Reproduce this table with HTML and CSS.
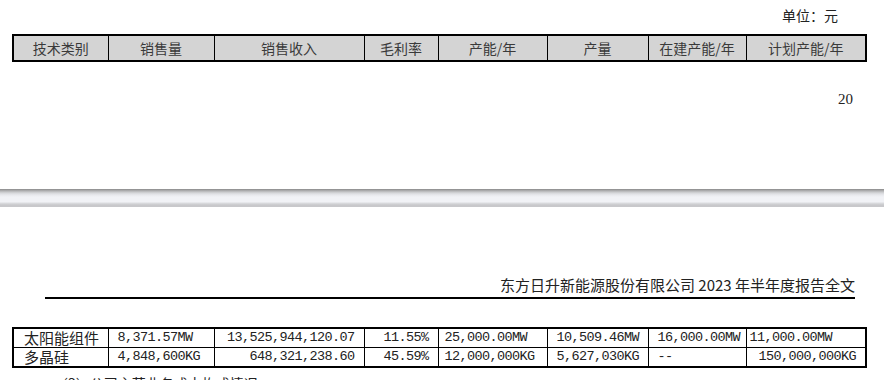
FILE: index.html
```html
<!DOCTYPE html>
<html lang="zh">
<head>
<meta charset="utf-8">
<link rel="stylesheet" href="styles.css">
</head>
<body>
<section class="page page-top">
  <div class="unit">单位：元</div>
  <table class="tbl">
    <colgroup>
      <col class="c1"><col class="c2"><col class="c3"><col class="c4"><col class="c5"><col class="c6"><col class="c7"><col class="c8">
    </colgroup>
    <tr class="head">
      <td>技术类别</td><td>销售量</td><td>销售收入</td><td>毛利率</td><td>产能/年</td><td>产量</td><td>在建产能/年</td><td>计划产能/年</td>
    </tr>
  </table>
  <div class="pageno">20</div>
</section>
<div class="break"></div>
<section class="page page-bottom">
  <div class="runhead">东方日升新能源股份有限公司 2023 年半年度报告全文</div>
  <table class="tbl data">
    <colgroup>
      <col class="c1"><col class="c2"><col class="c3"><col class="c4"><col class="c5"><col class="c6"><col class="c7"><col class="c8">
    </colgroup>
    <tr>
      <td class="cn">太阳能组件</td><td class="num">8,371.57MW</td><td class="num r">13,525,944,120.07</td><td class="num r">11.55%</td><td class="num p5">25,000.00MW</td><td class="num">10,509.46MW</td><td class="num">16,000.00MW</td><td class="num p8">11,000.00MW</td>
    </tr>
    <tr>
      <td class="cn">多晶硅</td><td class="num">4,848,600KG</td><td class="num r">648,321,238.60</td><td class="num r">45.59%</td><td class="num p5">12,000,000KG</td><td class="num">5,627,030KG</td><td class="num">--</td><td class="num r">150,000,000KG</td>
    </tr>
  </table>
  <div class="cut">（3）公司主营业务成本构成情况</div>
</section>
</body>
</html>
```
FILE: styles.css
```css
html, body {
  margin: 0;
  padding: 0;
  background: #ffffff;
  height: 380px;
  overflow: hidden;
}
body {
  font-family: "Liberation Serif", "Noto Sans CJK SC", serif;
  color: #222;
}
.page-top {
  height: 189px;
  padding: 0 19px 0 12px;
  box-sizing: border-box;
}
.unit {
  font-family: "Noto Sans CJK SC", sans-serif;
  font-size: 14px;
  line-height: 20px;
  height: 20px;
  padding-top: 5px;
  padding-right: 27px;
  text-align: right;
  color: #222;
  margin-bottom: 9px;
}
.tbl {
  border-collapse: collapse;
  table-layout: fixed;
  width: 853px;
  border: 2px solid #000;
}
.c1 { width: 95px; }
.c2 { width: 106px; }
.c3 { width: 150px; }
.c4 { width: 74px; }
.c5 { width: 109px; }
.c6 { width: 101px; }
.c7 { width: 98px; }
.c8 { width: 120px; }
.tbl td {
  border: 1px solid #000;
  padding: 0 4px;
  white-space: nowrap;
  overflow: hidden;
}
.head td {
  background: #d4d4d4;
  height: 24px;
  text-align: center;
  font-family: "Noto Sans CJK SC", sans-serif;
  font-size: 14px;
  color: #3a3a3a;
  line-height: 24px;
}
.pageno {
  text-align: right;
  padding-right: 12px;
  margin-top: 28px;
  font-size: 15px;
  line-height: 18px;
  color: #222;
}
.break {
  height: 18px;
  background: linear-gradient(to bottom, #8a8a8a 0px, #b4b4b6 2px, #d6d7da 4px, #e8e9ed 6px, #f1f2f6 8px, #f1f2f6 13px, #dcdde0 14px, #c8c8cb 16px, #c8c8cb 18px);
}
.page-bottom {
  padding: 0 0 0 12px;
}
.runhead {
  margin-left: 33px;
  width: 810px;
  text-align: right;
  font-family: "Noto Sans CJK SC", sans-serif;
  font-size: 15px;
  line-height: 20px;
  padding-top: 68px;
  padding-bottom: 2px;
  border-bottom: 2px solid #000;
  color: #222;
}
.data {
  margin-top: 28px;
}
.data td {
  height: 18px;
  line-height: 18px;
  padding: 0 6px 0 9px;
}
.data .cn {
  font-family: "Noto Sans CJK SC", sans-serif;
  font-size: 15px;
  color: #222;
  padding-left: 10px;
}
.data .num {
  font-family: "Liberation Mono", monospace;
  font-size: 13.5px;
  letter-spacing: -0.6px;
  color: #222;
}
.data .r {
  text-align: right;
  padding-right: 9px;
}
.data .p5 {
  padding-left: 6px;
}
.data .p8 {
  padding-left: 3px;
}
.cut {
  margin-top: 5px;
  padding-left: 42px;
  font-family: "Noto Sans CJK SC", sans-serif;
  font-size: 14px;
  line-height: 20px;
  color: #222;
}
```
